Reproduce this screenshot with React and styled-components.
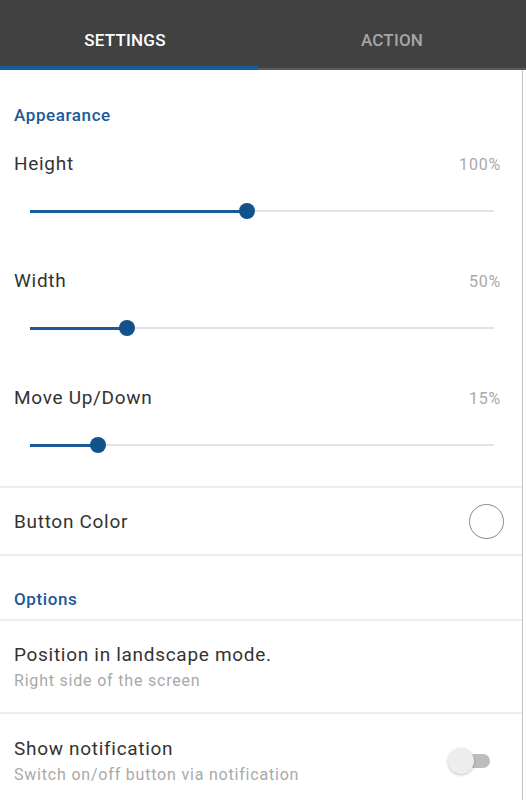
import React from 'react';
import styled, { createGlobalStyle } from 'styled-components';

const Global = createGlobalStyle`
  html, body {
    margin: 0;
    padding: 0;
    background: #fff;
    font-family: Roboto, "Noto Sans", Arial, sans-serif;
  }
`;

const BLUE = '#1a5a96';

const St = {
  Page: styled.div`
    width: 526px;
    height: 800px;
    overflow: hidden;
    display: flex;
    flex-direction: column;
  `,
  TabBar: styled.div`
    height: 70px;
    background: #414141;
    display: flex;
    box-shadow: inset 0 -2px 0 #5a5a5a;
    flex-shrink: 0;
  `,
  Tab: styled.div`
    flex: 0 0 ${p => p.$w}px;
    display: flex;
    align-items: center;
    justify-content: center;
    padding-top: 14px;
    padding-right: ${p => (p.$active ? 8 : 0)}px;
    box-sizing: border-box;
    font-size: 17px;
    font-weight: 500;
    letter-spacing: 0.2px;
    color: ${p => (p.$active ? '#ffffff' : '#a6a6a6')};
    border-bottom: 4px solid ${p => (p.$active ? BLUE : 'transparent')};
  `,
  Body: styled.div`
    width: 522px;
    flex: 1;
    border-right: 1px solid #c4c4c4;
    display: flex;
    flex-direction: column;
  `,
  Category: styled.div`
    height: 65px;
    box-sizing: border-box;
    padding: 0 14px 10px;
    display: flex;
    align-items: flex-end;
    color: ${BLUE};
    font-size: 17px;
    font-weight: 500;
    letter-spacing: 0.6px;
    border-bottom: ${p => (p.$line ? '2px solid #ececec' : 'none')};
  `,
  SliderBlock: styled.div`
    height: 117px;
    box-sizing: border-box;
    padding: 17px 22px 0 14px;
    display: flex;
    flex-direction: column;
  `,
  LabelRow: styled.div`
    display: flex;
    justify-content: space-between;
    align-items: baseline;
  `,
  Label: styled.div`
    font-size: 19px;
    letter-spacing: 0.7px;
    color: #333;
  `,
  Value: styled.div`
    font-size: 16px;
    letter-spacing: 0.8px;
    color: #a9a9a9;
    margin-right: -1px;
  `,
  Track: styled.div`
    position: relative;
    margin: 35px 6px 0 16px;
    height: 2px;
    background: #e2e2e2;
  `,
  Fill: styled.div`
    height: 3px;
    margin-top: -0.5px;
    background: ${BLUE};
  `,
  Thumb: styled.div`
    position: absolute;
    top: 50%;
    width: 16px;
    height: 16px;
    margin: -8px 0 0 -8px;
    border-radius: 50%;
    background: #125189;
  `,
  Divider: styled.div`
    height: 2px;
    background: #ececec;
  `,
  Row: styled.div`
    height: ${p => p.$h}px;
    box-sizing: border-box;
    padding: 0 18px 0 14px;
    display: flex;
    align-items: center;
    justify-content: space-between;
    border-bottom: ${p => (p.$line ? '2px solid #ececec' : 'none')};
  `,
  TextCol: styled.div`
    display: flex;
    flex-direction: column;
    gap: 5px;
  `,
  Sub: styled.div`
    font-size: 16px;
    letter-spacing: 0.8px;
    color: #a9a9a9;
  `,
  ColorCircle: styled.div`
    width: 33px;
    height: 33px;
    border-radius: 50%;
    border: 1.5px solid #8a8a8a;
  `,
  Switch: styled.div`
    position: relative;
    width: 34px;
    height: 14px;
    border-radius: 7px;
    background: #bdbdbd;
    margin: 0 14px 0 0;
  `,
  Knob: styled.div`
    position: absolute;
    left: -8px;
    top: -6px;
    width: 26px;
    height: 26px;
    border-radius: 50%;
    background: #ededed;
    box-shadow: 0 1px 3px rgba(0, 0, 0, 0.25);
  `,
};

const sliders = [
  { label: 'Height', value: '100%', pos: 0.468 },
  { label: 'Width', value: '50%', pos: 0.209 },
  { label: 'Move Up/Down', value: '15%', pos: 0.147 },
];

function Slider({ label, value, pos }) {
  return (
    <St.SliderBlock>
      <St.LabelRow>
        <St.Label>{label}</St.Label>
        <St.Value>{value}</St.Value>
      </St.LabelRow>
      <St.Track>
        <St.Fill style={{ width: `${pos * 100}%` }} />
        <St.Thumb style={{ left: `${pos * 100}%` }} />
      </St.Track>
    </St.SliderBlock>
  );
}

export default function App() {
  return (
    <St.Page>
      <Global />
      <St.TabBar>
        <St.Tab $w={258} $active>SETTINGS</St.Tab>
        <St.Tab $w={268}>ACTION</St.Tab>
      </St.TabBar>
      <St.Body>
        <St.Category>Appearance</St.Category>
        {sliders.map(s => (
          <Slider key={s.label} {...s} />
        ))}
        <St.Divider />
        <St.Row $h={68} $line>
          <St.Label>Button Color</St.Label>
          <St.ColorCircle />
        </St.Row>
        <St.Category $line>Options</St.Category>
        <St.Row $h={93} $line>
          <St.TextCol>
            <St.Label>Position in landscape mode.</St.Label>
            <St.Sub>Right side of the screen</St.Sub>
          </St.TextCol>
        </St.Row>
        <St.Row $h={93}>
          <St.TextCol>
            <St.Label>Show notification</St.Label>
            <St.Sub>Switch on/off button via notification</St.Sub>
          </St.TextCol>
          <St.Switch>
            <St.Knob />
          </St.Switch>
        </St.Row>
      </St.Body>
    </St.Page>
  );
}
